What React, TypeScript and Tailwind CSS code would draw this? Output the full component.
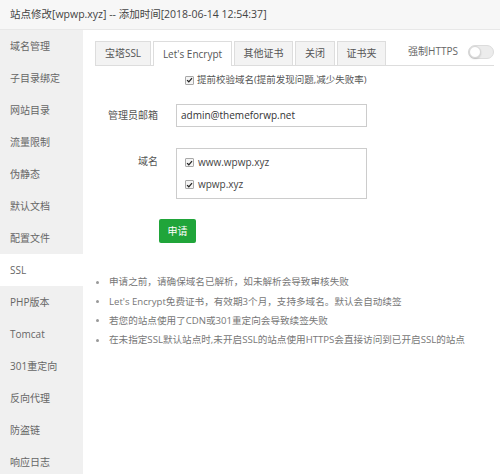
import React from "react";

const menu = [
  "域名管理",
  "子目录绑定",
  "网站目录",
  "流量限制",
  "伪静态",
  "默认文档",
  "配置文件",
  "SSL",
  "PHP版本",
  "Tomcat",
  "301重定向",
  "反向代理",
  "防盗链",
  "响应日志",
];

const tabs = [
  { label: "宝塔SSL", w: "w-[56px]" },
  { label: "Let's Encrypt", w: "w-[79px]" },
  { label: "其他证书", w: "w-[59px]" },
  { label: "关闭", w: "w-[40px]" },
  { label: "证书夹", w: "w-[49px]" },
];

const tips = [
  "申请之前，请确保域名已解析，如未解析会导致审核失败",
  "Let's Encrypt免费证书，有效期3个月，支持多域名。默认会自动续签",
  "若您的站点使用了CDN或301重定向会导致续签失败",
  "在未指定SSL默认站点时,未开启SSL的站点使用HTTPS会直接访问到已开启SSL的站点",
];

function Check() {
  return (
    <span className="flex h-[9px] w-[9px] shrink-0 items-center justify-center rounded-[1px] border border-[#a8a8a8] bg-[#f4f4f4]">
      <svg viewBox="0 0 10 10" className="h-[8px] w-[8px]">
        <path d="M1.5 5.2 L4 7.6 L8.6 2.2" fill="none" stroke="#222" strokeWidth="1.8" />
      </svg>
    </span>
  );
}

export default function App() {
  return (
    <div
      className="h-[474px] w-[500px] overflow-hidden bg-white text-[10px] text-[#555]"
      style={{ fontFamily: '"Open Sans", "Noto Sans CJK SC", sans-serif' }}
    >
      <div className="flex h-[30px] items-center border-b border-[#e8e8e8] bg-[#f7f7f7] px-[10px] text-[10.5px] text-[#444]">
        站点修改[wpwp.xyz] -- 添加时间[2018-06-14 12:54:37]
      </div>

      <div className="flex">
        <div className="w-[83px] shrink-0 bg-[#f0f0f0] text-[#666]">
          {menu.map((m) => (
            <div
              key={m}
              className={`flex h-[32px] items-center pl-[10px] ${m === "SSL" ? "bg-white" : ""}`}
            >
              {m}
            </div>
          ))}
        </div>

        <div className="flex-1 pl-[12px] pr-[6px] pt-[12px]">
          <div className="flex h-[24px] items-end border-b border-[#dddddd]">
            <div className="flex gap-[2px]">
              {tabs.map((t, i) => (
                <div
                  key={t.label}
                  className={`flex h-[24px] items-center justify-center border border-b-0 border-[#dddddd] ${t.w} ${
                    i === 1 ? "-mb-px h-[25px] bg-white text-[#555]" : "bg-[#f3f3f3] text-[#555]"
                  }`}
                >
                  {t.label}
                </div>
              ))}
            </div>
            <div className="mb-[6px] ml-auto flex items-center gap-[10px]">
              <span className="text-[#666]">强制HTTPS</span>
              <span className="relative h-[14px] w-[26px] rounded-full border border-[#dcdcdc] bg-[#ececec]">
                <span className="absolute left-0 top-0 h-[12px] w-[12px] rounded-full border border-[#d6d6d6] bg-white shadow-[0_1px_2px_rgba(0,0,0,0.15)]" />
              </span>
            </div>
          </div>

          <div className="mt-[6px] flex h-[16px] items-center gap-[3px] pl-[90px] text-[9.5px] text-[#555]">
            <Check />
            <span>提前校验域名(提前发现问题,减少失败率)</span>
          </div>

          <div className="mt-[16px] flex items-center">
            <div className="w-[63px] text-right text-[#555]">管理员邮箱</div>
            <div className="ml-[18px] flex h-[23px] w-[191px] items-center border border-[#cccccc] px-[4px] text-[10px] text-[#333]">
              admin@themeforwp.net
            </div>
          </div>

          <div className="mt-[21px] flex items-start">
            <div className="w-[63px] pt-[6px] text-right text-[#555]">域名</div>
            <div className="ml-[18px] flex h-[51px] w-[191px] flex-col justify-center gap-[7px] border border-[#cccccc] pl-[8px] text-[#444]">
              <div className="flex items-center gap-[4px]">
                <Check />
                <span>www.wpwp.xyz</span>
              </div>
              <div className="flex items-center gap-[4px]">
                <Check />
                <span>wpwp.xyz</span>
              </div>
            </div>
          </div>

          <button className="ml-[64px] mt-[20px] flex h-[24px] w-[37px] items-center justify-center rounded-[2px] bg-[#20a53a] text-white">
            申请
          </button>

          <ul className="mt-[30px] flex flex-col text-[9.6px]">
            {tips.map((t) => (
              <li key={t} className="flex h-[19.2px] items-center text-[#777]">
                <span className="ml-[1px] mr-[10px] h-[3px] w-[3px] rounded-full bg-[#999]" />
                {t}
              </li>
            ))}
          </ul>
        </div>
      </div>
    </div>
  );
}
